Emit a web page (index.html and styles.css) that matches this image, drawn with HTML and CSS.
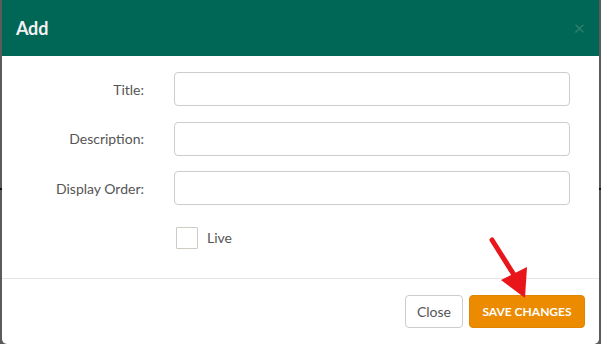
FILE: index.html
```html
<!DOCTYPE html>
<html>
<head>
<meta charset="utf-8">
<link rel="stylesheet" href="styles.css">
</head>
<body>
<div class="modal">
  <div class="modal-header">
    <h4 class="modal-title">Add</h4>
    <span class="close">&times;</span>
  </div>
  <div class="modal-body">
    <div class="form-row">
      <label class="form-label">Title:</label>
      <input class="form-input" type="text">
    </div>
    <div class="form-row">
      <label class="form-label">Description:</label>
      <input class="form-input" type="text">
    </div>
    <div class="form-row">
      <label class="form-label">Display Order:</label>
      <input class="form-input" type="text">
    </div>
    <div class="form-row check-row">
      <span></span>
      <label class="check"><span class="check-box"></span><span class="check-text">Live</span></label>
    </div>
  </div>
  <div class="modal-footer">
    <button class="btn btn-default">Close</button>
    <button class="btn btn-primary">SAVE CHANGES</button>
  </div>
  <svg class="arrow" width="60" height="70" viewBox="0 0 60 70">
    <line x1="6" y1="4" x2="30" y2="42" stroke="#e8161b" stroke-width="5" stroke-linecap="round"/>
    <polygon points="15,44 41,31 39,62" fill="#e8161b"/>
  </svg>
</div>
</body>
</html>
```
FILE: styles.css
```css
html, body {
  margin: 0;
  padding: 0;
}
body {
  width: 601px;
  height: 344px;
  overflow: hidden;
  background: linear-gradient(to bottom, #5b5b5b 0, #5b5b5b 188px, #111 188px, #111 190px, #5b5b5b 190px);
  font-family: Lato, "Open Sans", sans-serif;
}
.modal {
  position: relative;
  margin: 0 2px;
  width: 597px;
  height: 344px;
  background: #fff;
  border-radius: 0 0 5px 5px;
  box-sizing: border-box;
}
.modal-header {
  height: 56px;
  background: #006656;
  display: flex;
  align-items: center;
  justify-content: space-between;
  padding: 0 14px 0 14px;
  box-sizing: border-box;
}
.modal-title {
  margin: 0;
  color: #f2f2f2;
  font-size: 18px;
  font-weight: 700;
  letter-spacing: -0.2px;
}
.close {
  color: #2e7f6f;
  font-size: 20px;
  line-height: 1;
  margin-top: -2px;
}
.modal-body {
  padding: 16px 29px 0 0;
  height: 223px;
  box-sizing: border-box;
  border-bottom: 1px solid #e5e5e5;
}
.form-row {
  display: grid;
  grid-template-columns: 142px 396px;
  column-gap: 30px;
  align-items: center;
  margin-bottom: 15.5px;
}
.form-label {
  text-align: right;
  font-size: 14px;
  color: #555;
}
.form-input {
  height: 34px;
  box-sizing: border-box;
  border: 1px solid #ccc;
  border-radius: 4px;
  margin: 0;
  padding: 6px 12px;
  font-size: 14px;
  background: #fff;
}
.check-row {
  margin-top: 22px;
}
.check {
  display: flex;
  align-items: center;
  margin-left: 2px;
}
.check-box {
  width: 22px;
  height: 22px;
  box-sizing: border-box;
  border: 1px solid #cfcac4;
  border-radius: 1px;
}
.check-text {
  margin-left: 9px;
  font-size: 14px;
  color: #555;
  margin-top: -1px;
}
.modal-footer {
  display: flex;
  justify-content: flex-end;
  gap: 6px;
  padding: 16px 14px 0 0;
}
.btn {
  height: 33px;
  box-sizing: border-box;
  border-radius: 4px;
  font-family: Lato, "Open Sans", sans-serif;
  font-size: 14px;
  padding: 0 12px;
  margin: 0;
  cursor: pointer;
}
.btn-default {
  background: #fff;
  border: 1px solid #ccc;
  color: #555;
  width: 58px;
  padding: 0;
}
.btn-primary {
  background: #ec8b00;
  border: 1px solid #e18400;
  color: #fff;
  font-weight: 700;
  font-size: 12px;
  width: 116px;
  padding: 0;
}
.arrow {
  position: absolute;
  left: 484px;
  top: 236px;
}
```
